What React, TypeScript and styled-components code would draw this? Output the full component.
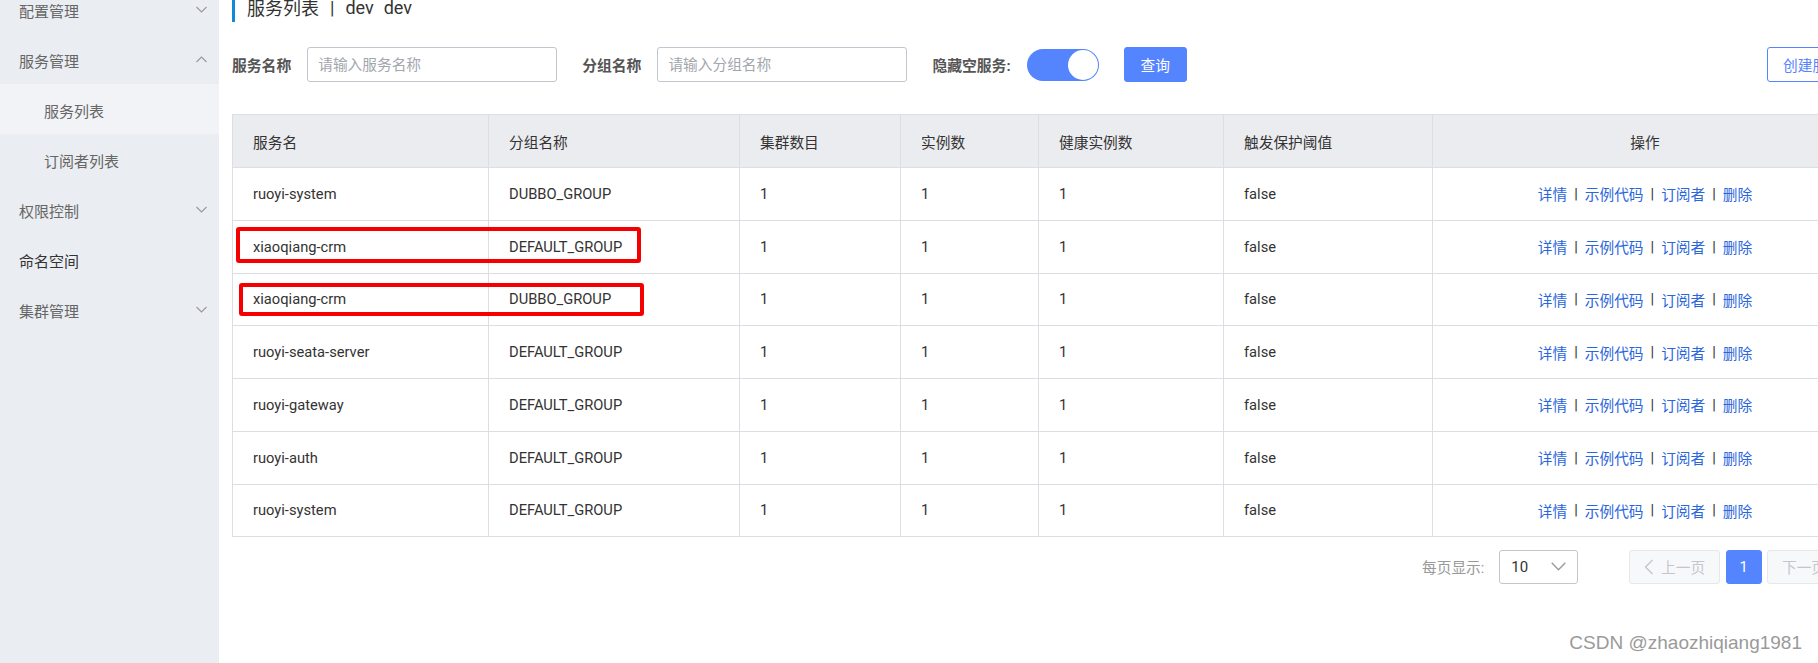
import React from 'react';
import styled, { createGlobalStyle } from 'styled-components';

const GlobalStyle = createGlobalStyle`
  html, body {
    margin: 0;
    padding: 0;
    overflow: hidden;
    background: #fff;
  }
  body {
    font-family: Roboto, "Noto Sans CJK SC", sans-serif;
    color: #333;
  }
  * {
    box-sizing: border-box;
  }
`;

const Page = styled.div`
  position: relative;
  display: flex;
  width: 1818px;
  height: 663px;
  overflow: hidden;
`;

/* ---------- sidebar ---------- */

const Sidebar = styled.nav`
  flex: 0 0 219px;
  background: #eaedf1;
`;

const MenuList = styled.ul`
  list-style: none;
  margin: -16px 0 0;
  padding: 0;
`;

const MenuItem = styled.li<{ $sub?: boolean; $active?: boolean; $strong?: boolean }>`
  height: 50px;
  display: flex;
  align-items: center;
  justify-content: space-between;
  padding: 0 12px 0 ${p => (p.$sub ? 44 : 19)}px;
  background: ${p => (p.$active ? '#f2f3f7' : 'transparent')};
  font-size: 15px;
  color: ${p => (p.$strong ? '#333' : '#666')};
`;

const MenuText = styled.span`
  margin-top: 3px;
`;

const Chevron: React.FC<{ up?: boolean }> = ({ up }) => (
  <svg width="11" height="7" viewBox="0 0 11 7">
    <polyline
      points={up ? '0.5,6 5.5,1 10.5,6' : '0.5,1 5.5,6 10.5,1'}
      fill="none"
      stroke="#999"
      strokeWidth="1.1"
    />
  </svg>
);

/* ---------- main ---------- */

const Main = styled.main`
  flex: 0 0 auto;
  width: 1652px;
  padding: 0 13px;
`;

const TitleBar = styled.h1`
  margin: -8px 0 0;
  height: 30px;
  display: flex;
  align-items: center;
  border-left: 3px solid #0e8ad6;
  padding-left: 12px;
  font-size: 18px;
  font-weight: normal;
  color: #333;
`;

const TitleSep = styled.span`
  margin: 0 11px;
`;

const TitleEnv = styled.span`
  margin-left: 10px;
`;

const SearchRow = styled.div`
  display: flex;
  align-items: center;
  margin-top: 25px;
  height: 35px;
`;

const FormItem = styled.div`
  display: flex;
  align-items: center;
  gap: 16px;
  margin-right: 25.5px;
`;

const Label = styled.label`
  font-size: 14.8px;
  font-weight: bold;
  color: #555;
`;

const Input = styled.input`
  width: 249.5px;
  height: 35px;
  border: 1px solid #c4c6cf;
  border-radius: 3px;
  padding: 0 10px;
  font-family: inherit;
  font-size: 14.7px;
  color: #333;
  outline: none;

  &::placeholder {
    color: #a3a6ad;
  }
`;

const Switch = styled.span`
  display: flex;
  justify-content: flex-end;
  align-items: center;
  width: 72px;
  height: 32px;
  padding: 1px;
  border-radius: 16px;
  background: #5584ff;
`;

const Knob = styled.span`
  width: 30px;
  height: 30px;
  border-radius: 50%;
  background: #fff;
`;

const Button = styled.button<{ $primary?: boolean; $width: number }>`
  width: ${p => p.$width}px;
  height: 35px;
  padding: 0;
  border: 1px solid #5584ff;
  border-radius: 3px;
  background: ${p => (p.$primary ? '#5584ff' : '#fff')};
  color: ${p => (p.$primary ? '#fff' : '#5584ff')};
  font-family: inherit;
  font-size: 14.7px;
`;

const Spacer = styled.div`
  flex: 1;
`;

/* ---------- table ---------- */

const TableBox = styled.div`
  position: relative;
  margin-top: 32.3px;
  border: 1px solid #dcdee3;
  border-bottom: none;
`;

const Row = styled.div<{ $head?: boolean }>`
  display: grid;
  grid-template-columns: 256px 251px 161px 138px 185px 209px 1fr;
  height: 52.75px;
  border-bottom: 1px solid #dcdee3;
  background: ${p => (p.$head ? '#ebecf0' : '#fff')};
`;

const Cell = styled.div<{ $center?: boolean }>`
  display: flex;
  align-items: center;
  justify-content: ${p => (p.$center ? 'center' : 'flex-start')};
  padding: 0 20px;
  border-right: 1px solid #dcdee3;
  font-size: 14.7px;
  color: #333;
  white-space: nowrap;

  &:last-child {
    border-right: none;
  }
`;

const ActionLink = styled.a`
  color: #2a66dc;
  text-decoration: none;
`;

const ActionSep = styled.span`
  margin: 0 7px;
  color: #333;
`;

const Highlight = styled.div<{ $left: number; $top: number; $w: number; $h: number }>`
  position: absolute;
  left: ${p => p.$left}px;
  top: ${p => p.$top}px;
  width: ${p => p.$w}px;
  height: ${p => p.$h}px;
  border: 4px solid #f50000;
  border-radius: 3px;
  pointer-events: none;
`;

/* ---------- pagination ---------- */

const Pager = styled.div`
  display: flex;
  align-items: center;
  justify-content: flex-end;
  height: 34px;
  margin-top: 12.5px;
`;

const PagerLabel = styled.span`
  font-size: 14.7px;
  color: #999;
  margin-right: 15px;
`;

const SizeSelect = styled.div`
  display: flex;
  align-items: center;
  justify-content: space-between;
  width: 79px;
  height: 34px;
  padding: 0 11px 0 11px;
  border: 1px solid #c4c6cf;
  border-radius: 3px;
  font-size: 15px;
  color: #333;
  margin-right: 45px;
`;

const PageBtn = styled.div<{ $current?: boolean; $w: number }>`
  display: flex;
  align-items: center;
  justify-content: center;
  gap: 7px;
  width: ${p => p.$w}px;
  height: 34px;
  margin-left: 5.5px;
  border: 1px solid ${p => (p.$current ? '#5584ff' : '#e6e7eb')};
  border-radius: 3px;
  background: ${p => (p.$current ? '#5584ff' : '#f7f8fa')};
  color: ${p => (p.$current ? '#fff' : '#c4c6cf')};
  font-size: 14.7px;
`;

const Watermark = styled.div`
  position: absolute;
  right: 16px;
  top: 632px;
  font-family: "Liberation Sans", Arial, sans-serif;
  font-size: 19px;
  line-height: 21px;
  color: #9a9a9a;
  text-shadow: 0 0 1px rgba(255, 255, 255, 0.8);
`;

const menu = [
  { text: '配置管理', chevron: 'down' },
  { text: '服务管理', chevron: 'up' },
  { text: '服务列表', sub: true, active: true },
  { text: '订阅者列表', sub: true },
  { text: '权限控制', chevron: 'down' },
  { text: '命名空间', strong: true },
  { text: '集群管理', chevron: 'down' },
];

const columns = ['服务名', '分组名称', '集群数目', '实例数', '健康实例数', '触发保护阈值'];

const services = [
  { name: 'ruoyi-system', group: 'DUBBO_GROUP' },
  { name: 'xiaoqiang-crm', group: 'DEFAULT_GROUP' },
  { name: 'xiaoqiang-crm', group: 'DUBBO_GROUP' },
  { name: 'ruoyi-seata-server', group: 'DEFAULT_GROUP' },
  { name: 'ruoyi-gateway', group: 'DEFAULT_GROUP' },
  { name: 'ruoyi-auth', group: 'DEFAULT_GROUP' },
  { name: 'ruoyi-system', group: 'DEFAULT_GROUP' },
];

const actions = ['详情', '示例代码', '订阅者', '删除'];

const ArrowLeft = () => (
  <svg width="10" height="16" viewBox="0 0 10 16">
    <polyline points="8.5,1 1.5,8 8.5,15" fill="none" stroke="#c4c6cf" strokeWidth="1.4" />
  </svg>
);

const ArrowRight = () => (
  <svg width="10" height="16" viewBox="0 0 10 16">
    <polyline points="1.5,1 8.5,8 1.5,15" fill="none" stroke="#c4c6cf" strokeWidth="1.4" />
  </svg>
);

const SelectArrow = () => (
  <svg width="15" height="9" viewBox="0 0 15 9">
    <polyline points="0.7,0.7 7.5,7.8 14.3,0.7" fill="none" stroke="#999" strokeWidth="1.3" />
  </svg>
);

const App: React.FC = () => {
  return (
    <Page>
      <GlobalStyle />
      <Sidebar>
        <MenuList>
          {menu.map((item, index) => (
            <MenuItem key={index} $sub={item.sub} $active={item.active} $strong={item.strong}>
              <MenuText>{item.text}</MenuText>
              {item.chevron && <Chevron up={item.chevron === 'up'} />}
            </MenuItem>
          ))}
        </MenuList>
      </Sidebar>

      <Main>
        <TitleBar>
          服务列表<TitleSep>|</TitleSep>dev<TitleEnv>dev</TitleEnv>
        </TitleBar>

        <SearchRow>
          <FormItem>
            <Label>服务名称</Label>
            <Input placeholder="请输入服务名称" />
          </FormItem>
          <FormItem>
            <Label>分组名称</Label>
            <Input placeholder="请输入分组名称" />
          </FormItem>
          <FormItem>
            <Label>隐藏空服务:</Label>
            <Switch>
              <Knob />
            </Switch>
          </FormItem>
          <Button $primary $width={62.5}>查询</Button>
          <Spacer />
          <Button $width={91}>创建服务</Button>
        </SearchRow>

        <TableBox>
          <Row $head>
            {columns.map(col => (
              <Cell key={col}>{col}</Cell>
            ))}
            <Cell $center>操作</Cell>
          </Row>
          {services.map((svc, index) => (
            <Row key={index}>
              <Cell>{svc.name}</Cell>
              <Cell>{svc.group}</Cell>
              <Cell>1</Cell>
              <Cell>1</Cell>
              <Cell>1</Cell>
              <Cell>false</Cell>
              <Cell $center>
                {actions.map((action, i) => (
                  <React.Fragment key={action}>
                    {i > 0 && <ActionSep>|</ActionSep>}
                    <ActionLink href="#">{action}</ActionLink>
                  </React.Fragment>
                ))}
              </Cell>
            </Row>
          ))}
          <Highlight $left={2.5} $top={111.7} $w={405.6} $h={36.3} />
          <Highlight $left={6} $top={167.4} $w={405} $h={33.2} />
        </TableBox>

        <Pager>
          <PagerLabel>每页显示:</PagerLabel>
          <SizeSelect>
            <span>10</span>
            <SelectArrow />
          </SizeSelect>
          <PageBtn $w={91.5}>
            <ArrowLeft />
            上一页
          </PageBtn>
          <PageBtn $current $w={35.7}>1</PageBtn>
          <PageBtn $w={91}>
            下一页
            <ArrowRight />
          </PageBtn>
        </Pager>
      </Main>

      <Watermark>CSDN @zhaozhiqiang1981</Watermark>
    </Page>
  );
};

export default App;
